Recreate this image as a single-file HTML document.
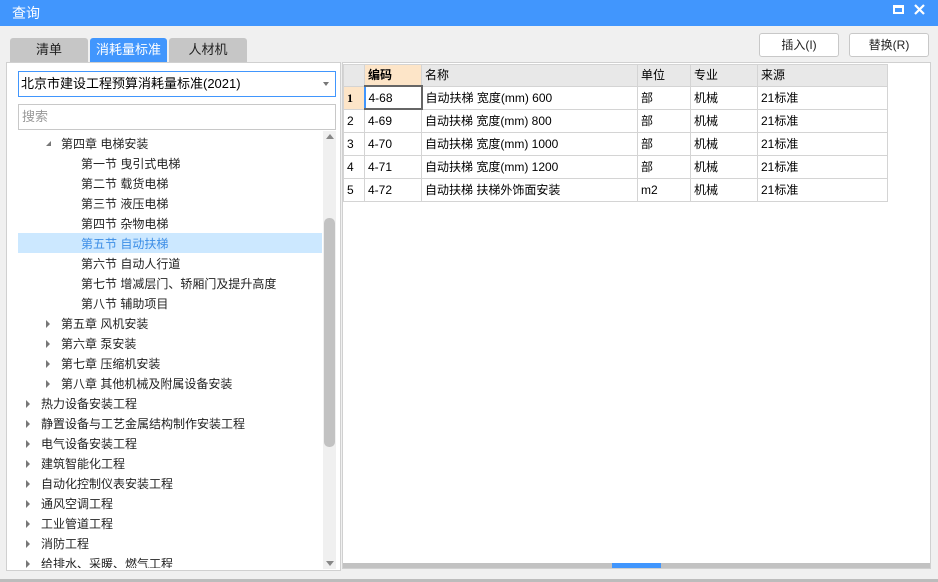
<!DOCTYPE html>
<html><head><meta charset="utf-8"><style>
*{box-sizing:border-box;margin:0;padding:0}
body{width:938px;height:582px;background:#f0f0f0;font-family:"Liberation Sans","Noto Sans CJK SC",sans-serif;font-size:12px;color:#000;position:relative;overflow:hidden}
.abs{position:absolute}
#title{left:0;top:0;width:938px;height:26px;background:#4196fd;color:#fff;font-size:14px;line-height:26px;padding-left:12px}
.tab{top:38px;height:24px;background:#c6c6c6;border-radius:3px 3px 0 0;text-align:center;line-height:24px;font-size:13px;color:#222}
.btn{top:33px;width:80px;height:24px;border:1px solid #c8c8c8;background:#fff;border-radius:3px;text-align:center;line-height:22px;color:#222}
#left{left:6px;top:62px;width:335px;height:509px;background:#fff;border:1px solid #d0d0d0}
.row{left:18px;width:304px;height:20px;line-height:20px;font-size:12px;color:#222;white-space:nowrap}
.arr{position:absolute;width:0;height:0;border-top:4px solid transparent;border-bottom:4px solid transparent;border-left:4px solid #777;top:6px}
#right{left:342px;top:62px;width:589px;height:507px;background:#fff;border:1px solid #d0d0d0}
table{position:absolute;left:343px;top:64px;border-collapse:collapse;font-size:12px}
td{border:1px solid #d4d4d4;height:23px;line-height:20px;padding:0 0 0 3px;white-space:nowrap}
tr.h td{background:#e8e8e8;height:21px}
</style></head><body>
<div id="title" class="abs">查询</div>
<div class="abs" style="left:893px;top:5px;width:11px;height:9px;border:2px solid #fff;border-top-width:3px"></div>
<svg class="abs" style="left:914px;top:4px" width="11" height="11"><path d="M1 1L10 10M10 1L1 10" stroke="#fff" stroke-width="2.2"/></svg>
<div class="abs tab" style="left:10px;width:78px">清单</div>
<div class="abs tab" style="left:90px;width:77px;background:#4196fd;color:#fff">消耗量标准</div>
<div class="abs tab" style="left:169px;width:78px">人材机</div>
<div class="abs btn" style="left:759px">插入(I)</div>
<div class="abs btn" style="left:849px">替换(R)</div>
<div id="left" class="abs"></div>
<div class="abs" style="left:18px;top:71px;width:318px;height:26px;border:1px solid #4196fd;background:#fff;line-height:24px;padding-left:2px;font-size:13px">北京市建设工程预算消耗量标准(2021)<span style="position:absolute;right:6px;top:10px;border-left:3px solid transparent;border-right:3px solid transparent;border-top:4px solid #777"></span></div>
<div class="abs" style="left:18px;top:104px;width:318px;height:26px;border:1px solid #c8c8c8;background:#fff;line-height:24px;padding-left:3px;color:#999;font-size:13px">搜索</div>
<div class="abs" style="left:18px;top:233px;width:304px;height:20px;background:#cce8ff"></div>
<div class="abs" style="left:323px;top:131px;width:13px;height:438px;background:#f0f0f0"></div>
<div class="abs" style="left:324px;top:218px;width:11px;height:229px;background:#c2c2c2;border-radius:5px"></div>
<div class="abs" style="left:326px;top:134px;border-left:4px solid transparent;border-right:4px solid transparent;border-bottom:5px solid #888"></div>
<div class="abs" style="left:326px;top:561px;border-left:4px solid transparent;border-right:4px solid transparent;border-top:5px solid #888"></div>
<div class="abs" style="left:0;top:134px;width:322px;height:434px;overflow:hidden">
<div class="abs row" style="top:0"><span class="abs" style="left:28px;top:7px;border-left:5px solid transparent;border-bottom:5px solid #777"></span><span style="margin-left:43px">第四章 电梯安装</span></div>
<div class="abs row" style="top:20px;padding-left:63px">第一节 曳引式电梯</div>
<div class="abs row" style="top:40px;padding-left:63px">第二节 载货电梯</div>
<div class="abs row" style="top:60px;padding-left:63px">第三节 液压电梯</div>
<div class="abs row" style="top:80px;padding-left:63px">第四节 杂物电梯</div>
<div class="abs row" style="top:100px;padding-left:63px;color:#3b8de6">第五节 自动扶梯</div>
<div class="abs row" style="top:120px;padding-left:63px">第六节 自动人行道</div>
<div class="abs row" style="top:140px;padding-left:63px">第七节 增减层门、轿厢门及提升高度</div>
<div class="abs row" style="top:160px;padding-left:63px">第八节 辅助项目</div>
<div class="abs row" style="top:180px;padding-left:43px"><i class="arr" style="left:28px"></i>第五章 风机安装</div>
<div class="abs row" style="top:200px;padding-left:43px"><i class="arr" style="left:28px"></i>第六章 泵安装</div>
<div class="abs row" style="top:220px;padding-left:43px"><i class="arr" style="left:28px"></i>第七章 压缩机安装</div>
<div class="abs row" style="top:240px;padding-left:43px"><i class="arr" style="left:28px"></i>第八章 其他机械及附属设备安装</div>
<div class="abs row" style="top:260px;padding-left:23px"><i class="arr" style="left:8px"></i>热力设备安装工程</div>
<div class="abs row" style="top:280px;padding-left:23px"><i class="arr" style="left:8px"></i>静置设备与工艺金属结构制作安装工程</div>
<div class="abs row" style="top:300px;padding-left:23px"><i class="arr" style="left:8px"></i>电气设备安装工程</div>
<div class="abs row" style="top:320px;padding-left:23px"><i class="arr" style="left:8px"></i>建筑智能化工程</div>
<div class="abs row" style="top:340px;padding-left:23px"><i class="arr" style="left:8px"></i>自动化控制仪表安装工程</div>
<div class="abs row" style="top:360px;padding-left:23px"><i class="arr" style="left:8px"></i>通风空调工程</div>
<div class="abs row" style="top:380px;padding-left:23px"><i class="arr" style="left:8px"></i>工业管道工程</div>
<div class="abs row" style="top:400px;padding-left:23px"><i class="arr" style="left:8px"></i>消防工程</div>
<div class="abs row" style="top:420px;padding-left:23px"><i class="arr" style="left:8px"></i>给排水、采暖、燃气工程</div>
</div>
<div id="right" class="abs"></div>
<table>
<tr class="h"><td style="width:21px"></td><td style="width:57px;background:#fde5c8;font-weight:bold">编码</td><td style="width:216px">名称</td><td style="width:53px">单位</td><td style="width:67px">专业</td><td style="width:130px">来源</td></tr>
<tr><td style="background:#fde5c8;font-weight:bold;font-family:'Liberation Serif',serif">1</td><td style="border:2px solid #666;border-left:2px solid #4196fd">4-68</td><td>自动扶梯 宽度(mm) 600</td><td>部</td><td>机械</td><td>21标准</td></tr>
<tr><td>2</td><td>4-69</td><td>自动扶梯 宽度(mm) 800</td><td>部</td><td>机械</td><td>21标准</td></tr>
<tr><td>3</td><td>4-70</td><td>自动扶梯 宽度(mm) 1000</td><td>部</td><td>机械</td><td>21标准</td></tr>
<tr><td>4</td><td>4-71</td><td>自动扶梯 宽度(mm) 1200</td><td>部</td><td>机械</td><td>21标准</td></tr>
<tr><td>5</td><td>4-72</td><td>自动扶梯 扶梯外饰面安装</td><td>m2</td><td>机械</td><td>21标准</td></tr>
</table>
<div class="abs" style="left:343px;top:563px;width:587px;height:5px;background:#c2c2c2"></div>
<div class="abs" style="left:612px;top:563px;width:49px;height:5px;background:#4196fd"></div>
<div class="abs" style="left:0;top:579px;width:938px;height:3px;background:#bcbcbc"></div>
</body></html>
